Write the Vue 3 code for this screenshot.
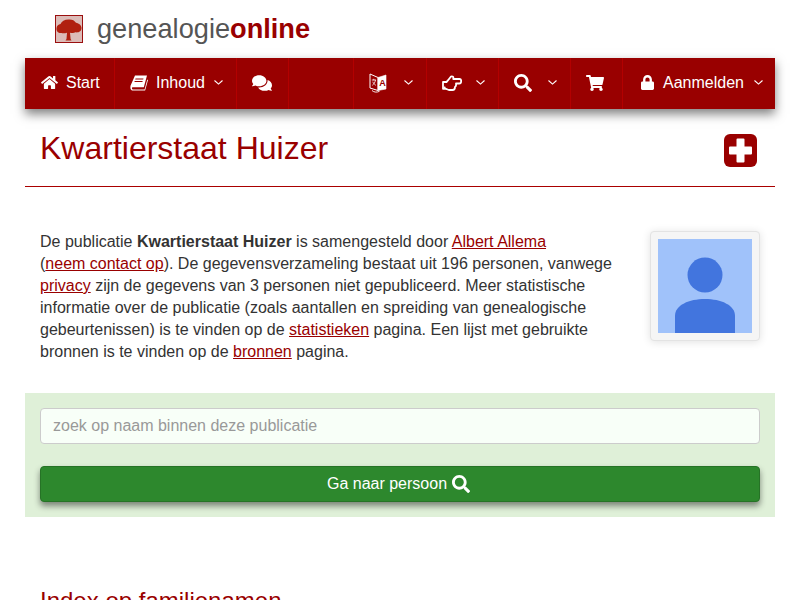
<script setup>
const leftItems = [
  { id: 'home', label: 'Start', w: 89 },
  { id: 'book', label: 'Inhoud', caret: true, w: 122 },
  { id: 'comments', w: 53 }
];
const rightItems = [
  { id: 'language', caret: true, w: 73 },
  { id: 'hand', caret: true, w: 72 },
  { id: 'search', caret: true, w: 72 },
  { id: 'cart', w: 52 },
  { id: 'lock', label: 'Aanmelden', caret: true, w: 153 }
];
</script>

<template>
  <div class="page">
    <header class="brand">
      <svg class="tree" width="28" height="28" viewBox="0 0 28 28">
        <rect x="0.5" y="0.5" width="27" height="27" fill="#dcbcb8" stroke="#9a0f0f" />
        <path class="crown" d="M1.500 13c.3-2.500 2-3.500 4-4 1-2.500 4-4.500 8-4.500 3.500-.3 6 1 7.500 3.200 3 .6 5.500 2.500 5.500 5.300 0 3.500-3 4.800-6 4.300-2 1.200-4.500.5-5.500.4l.6 6.300.9 1.500h-6l1-1.500.5-6.300c-2 .5-4 1-5.500.2-3 .5-5.300-1.500-5-4.400z" fill="#b0200f" />
      </svg>
      <span class="brand-name">genealogie<b>online</b></span>
    </header>

    <nav class="navbar">
      <ul class="nav-group">
        <li v-for="item in leftItems" :key="item.id" :class="'item-' + item.id" :style="{ width: item.w + 'px' }">
          <svg v-if="item.id === 'home'" class="icon" width="17" height="15" viewBox="0 0 576 512"><path d="M280.37 148.26L96 300.11V464a16 16 0 0 0 16 16l112.06-.29a16 16 0 0 0 15.92-16V368a16 16 0 0 1 16-16h64a16 16 0 0 1 16 16v95.64a16 16 0 0 0 16 16.05L464 480a16 16 0 0 0 16-16V300L295.67 148.26a12.19 12.19 0 0 0-15.3 0zM571.6 251.47L488 182.56V44.05a12 12 0 0 0-12-12h-56a12 12 0 0 0-12 12v72.61L318.47 43a48 48 0 0 0-61 0L4.34 251.47a12 12 0 0 0-1.6 16.9l25.5 31A12 12 0 0 0 45.15 301l235.22-193.74a12.19 12.19 0 0 1 15.3 0L530.9 301a12 12 0 0 0 16.9-1.6l25.5-31a12 12 0 0 0-1.7-16.93z" fill="#fff" /></svg>
          <svg v-else-if="item.id === 'book'" class="icon" width="18" height="16" viewBox="0 0 18 16"><path d="M5 .5h12l-3.2 11.700H2.600C1.600 12.200 1.800 14.500 3 14.500h11.600l2.700-10 .7.6-2.900 10.400H2.800C.6 15.500 0 13 .6 10.500zM5.500 3.500l-.3 1h8l.3-1zm-.8 2.500l-.3 1h8l.3-1z" fill="#fff" fill-rule="evenodd" /></svg>
          <svg v-else class="icon" width="20" height="18" viewBox="0 0 576 512"><path d="M416 192c0-88.400-93.100-160-208-160S0 103.600 0 192c0 34.300 14.100 65.900 38 92-13.400 30.200-35.500 54.200-35.800 54.500-2.200 2.300-2.800 5.700-1.500 8.700S4.800 352 8 352c36.600 0 66.900-12.300 88.700-25 32.200 15.700 70.300 25 111.300 25 114.900 0 208-71.600 208-160zm122 220c23.900-26 38-57.700 38-92 0-66.900-53.500-124.200-129.300-148.100.9 6.600 1.300 13.300 1.300 20.100 0 105.900-107.700 192-240 192-10.800 0-21.300-.8-31.700-1.900C207.800 439.600 281.800 480 368 480c41 0 79.100-9.200 111.300-25 21.800 12.700 52.100 25 88.700 25 3.200 0 6.100-1.900 7.300-4.800 1.300-2.900.7-6.300-1.500-8.700-.3-.3-22.400-24.200-35.800-54.500z" fill="#fff" /></svg>
          <span v-if="item.label" class="label">{{ item.label }}</span>
          <svg v-if="item.caret" class="caret" width="9" height="5" viewBox="0 0 9 5"><path d="M.5.500l4 3.600 4-3.600" fill="none" stroke="#fff" stroke-width="1.100" /></svg>
        </li>
      </ul>
      <ul class="nav-group">
        <li v-for="item in rightItems" :key="item.id" :class="'item-' + item.id" :style="{ width: item.w + 'px' }">
          <svg v-if="item.id === 'language'" class="icon" width="18" height="20" viewBox="0 0 18 20">
            <path d="M1 1l8 3.500v13l-8-2.500z" fill="none" stroke="#fff" stroke-width="1" />
            <path d="M9 4.500l8-2.500v14l-8 1.500z" fill="#fff" stroke="#fff" stroke-width=".6" />
            <text x="10.300" y="13" class="lang-a">A</text>
            <path d="M2.800 7h4.200M4.800 5.800v1.500M3.300 12.300c1.500-1 2.700-2.700 3.200-5.300M3.800 8.700c.5 1.500 1.500 2.700 3 3.600" fill="none" stroke="#fff" stroke-width=".8" />
            <path d="M3 17.500c2 2 5 2 7.500.8" fill="none" stroke="#fff" stroke-width=".9" />
          </svg>
          <svg v-else-if="item.id === 'hand'" class="icon" width="20" height="16" viewBox="0 0 20 16">
            <path d="M1 7h3.500C6 5.500 7.500 3.500 9 1.500c1.500-.6 2.800.4 2.200 2.500h6.300c1.300 0 1.700 1 1.700 2s-.7 2.500-1.900 2.500H14c.3 1.500-.3 3-1 3.500 0 1.500-1 3-2.500 3H7c-1 0-2-.8-3-1.200H1z" fill="none" stroke="#fff" stroke-width="1.800" stroke-linejoin="round" />
            <circle cx="2.600" cy="12.600" r="1.100" fill="#fff" />
          </svg>
          <svg v-else-if="item.id === 'search'" class="icon" width="18" height="18" viewBox="0 0 512 512"><path d="M505 442.700L405.300 343c-4.500-4.500-10.600-7-17-7H372c27.600-35.300 44-79.700 44-128C416 93.100 322.900 0 208 0S0 93.100 0 208s93.100 208 208 208c48.300 0 92.700-16.400 128-44v16.300c0 6.400 2.500 12.500 7 17l99.700 99.700c9.400 9.400 24.600 9.400 33.900 0l28.300-28.300c9.400-9.400 9.400-24.600.1-34zM208 336c-70.700 0-128-57.200-128-128 0-70.700 57.200-128 128-128 70.700 0 128 57.200 128 128 0 70.700-57.200 128-128 128z" fill="#fff" /></svg>
          <svg v-else-if="item.id === 'cart'" class="icon" width="18" height="16" viewBox="0 0 576 512"><path d="M528.120 301.319l47.273-208C578.806 78.301 567.391 64 551.990 64H159.208l-9.166-44.810C147.758 8.021 137.930 0 126.529 0H24C10.745 0 0 10.745 0 24v16c0 13.255 10.745 24 24 24h69.883l70.248 343.435C147.325 417.100 136 435.222 136 456c0 30.928 25.072 56 56 56s56-25.072 56-56c0-15.674-6.447-29.835-16.824-40h209.647C430.447 426.165 424 440.326 424 456c0 30.928 25.072 56 56 56s56-25.072 56-56c0-22.172-12.888-41.332-31.579-50.405l5.517-24.276c3.413-15.018-8.002-29.319-23.403-29.319H218.117l-6.545-32h293.145c11.206 0 20.920-7.754 23.403-18.681z" fill="#fff" /></svg>
          <svg v-else class="icon" width="13" height="15" viewBox="0 0 448 512"><path d="M400 224h-24v-72C376 68.200 307.800 0 224 0S72 68.200 72 152v72H48c-26.500 0-48 21.500-48 48v192c0 26.500 21.500 48 48 48h352c26.500 0 48-21.500 48-48V272c0-26.500-21.500-48-48-48zm-104 0H152v-72c0-39.700 32.300-72 72-72s72 32.300 72 72v72z" fill="#fff" /></svg>
          <span v-if="item.label" class="label">{{ item.label }}</span>
          <svg v-if="item.caret" class="caret" width="9" height="5" viewBox="0 0 9 5"><path d="M.5.500l4 3.600 4-3.600" fill="none" stroke="#fff" stroke-width="1.100" /></svg>
        </li>
      </ul>
    </nav>

    <section class="title-row">
      <h1>Kwartierstaat Huizer</h1>
      <svg class="plus" width="33" height="33" viewBox="0 0 33 33">
        <rect width="33" height="33" rx="6" fill="#990000" />
        <path d="M13.500 4.500h6a1 1 0 0 1 1 1v7h6.500a1 1 0 0 1 1 1v6a1 1 0 0 1-1 1h-6.500v7a1 1 0 0 1-1 1h-6a1 1 0 0 1-1-1v-7H6a1 1 0 0 1-1-1v-6a1 1 0 0 1 1-1h6.500v-7a1 1 0 0 1 1-1z" fill="#fff" />
      </svg>
    </section>

    <section class="intro">
      <p>
        De publicatie <b>Kwartierstaat Huizer</b> is samengesteld door <a href="#">Albert Allema</a> <span class="nowrap">(<a href="#">neem contact op</a>).</span> De gegevensverzameling bestaat uit 196 personen, vanwege
        <a href="#">privacy</a> zijn de gegevens van 3 personen niet gepubliceerd. Meer statistische
        informatie over de publicatie (zoals aantallen en spreiding van genealogische
        gebeurtenissen) is te vinden op de <a href="#">statistieken</a> pagina. Een lijst met gebruikte
        bronnen is te vinden op de <a href="#">bronnen</a> pagina.
      </p>
      <div class="thumb">
        <svg width="94" height="94" viewBox="0 0 94 94">
          <rect width="94" height="94" fill="#a0c2fa" />
          <circle cx="47" cy="36" r="17.500" fill="#4275de" />
          <path d="M17 94V77c0-11 14-17 30-17s30 6 30 17v17z" fill="#4275de" />
        </svg>
      </div>
    </section>

    <form class="search" @submit.prevent>
      <input type="text" placeholder="zoek op naam binnen deze publicatie" />
      <button type="submit">
        Ga naar persoon
        <svg width="18" height="18" viewBox="0 0 512 512"><path d="M505 442.700L405.300 343c-4.500-4.500-10.600-7-17-7H372c27.600-35.300 44-79.700 44-128C416 93.100 322.900 0 208 0S0 93.100 0 208s93.100 208 208 208c48.300 0 92.700-16.400 128-44v16.300c0 6.400 2.500 12.500 7 17l99.700 99.700c9.400 9.400 24.600 9.400 33.900 0l28.300-28.300c9.400-9.400 9.400-24.600.1-34zM208 336c-70.700 0-128-57.200-128-128 0-70.700 57.200-128 128-128 70.700 0 128 57.200 128 128 0 70.700-57.200 128-128 128z" fill="#fff" /></svg>
      </button>
    </form>

    <h2>Index op familienamen</h2>
  </div>
</template>

<style scoped>
.page {
  width: 750px;
  margin: 0 auto;
  font-family: "Liberation Sans", Arial, sans-serif;
  font-size: 16px;
  line-height: 22px;
  color: #333;
}

.brand {
  display: flex;
  align-items: center;
  gap: 14px;
  height: 58px;
  padding-left: 30px;
}

.crown {
  filter: blur(0.5px);
}

.brand-name {
  font-size: 27.2px;
  color: #555;
}

.brand-name b {
  color: #990000;
}

.navbar {
  display: flex;
  justify-content: space-between;
  height: 51px;
  background: #990000;
  box-shadow: 0 5px 10px rgba(0, 0, 0, 0.5);
  color: #fff;
}

.nav-group {
  display: flex;
  margin: 0;
  padding: 0;
  list-style: none;
}

.nav-group li {
  display: flex;
  align-items: center;
  box-sizing: border-box;
  padding-left: 15px;
  padding-bottom: 2px;
  border-left: 1px solid #b30000;
}

.nav-group li.item-home {
  padding-left: 16px;
  border-left: 0;
}

.nav-group li.item-comments {
  border-right: 1px solid #b30000;
}

.nav-group li.item-lock {
  padding-left: 18px;
}

.label {
  margin-left: 8px;
}

.caret {
  margin-left: auto;
  margin-right: 13px;
}

.item-lock .caret {
  margin-right: 12px;
}

.item-lock .label {
  margin-left: 9px;
}

.lang-a {
  font-size: 9px;
  font-weight: bold;
  fill: #990000;
}

.title-row {
  display: flex;
  justify-content: space-between;
  align-items: flex-start;
  height: 78px;
  padding: 25px 18px 0 15px;
  box-sizing: border-box;
  border-bottom: 1px solid #aa0000;
}

h1 {
  margin: 0;
  font-size: 32px;
  font-weight: 400;
  line-height: 28px;
  color: #990000;
}

.intro {
  display: flex;
  justify-content: space-between;
  align-items: flex-start;
  padding: 44px 15px 30px;
}

.intro p {
  width: 585px;
  margin: 0;
}

.nowrap {
  white-space: nowrap;
}

a {
  color: #990000;
}

.thumb {
  display: flex;
  box-sizing: border-box;
  width: 110px;
  height: 110px;
  padding: 7px;
  background: #f5f5f5;
  border: 1px solid #e3e3e3;
  border-radius: 4px;
  box-shadow: 0 1px 8px rgba(0, 0, 0, 0.12);
}

.search {
  display: flex;
  flex-direction: column;
  gap: 22px;
  height: 124px;
  padding: 15px;
  box-sizing: border-box;
  background: #dff0d8;
}

input {
  box-sizing: border-box;
  width: 100%;
  height: 36px;
  padding: 0 12px;
  font: inherit;
  color: #333;
  background: #f8fff8;
  border: 1px solid #ccc;
  border-radius: 4px;
}

input::placeholder {
  color: #999;
}

button {
  display: flex;
  align-items: center;
  justify-content: center;
  gap: 5px;
  height: 36px;
  padding: 0 3px 0 0;
  font: inherit;
  color: #fff;
  background: #2d882d;
  border: 1px solid #267326;
  border-radius: 4px;
  box-shadow: 0 4px 6px rgba(0, 0, 0, 0.45);
}

h2 {
  margin: 71px 0 0;
  padding-left: 15px;
  font-size: 24px;
  font-weight: 400;
  line-height: 26px;
  color: #990000;
}
</style>

<style>
html,
body {
  overflow: hidden;
}
</style>
